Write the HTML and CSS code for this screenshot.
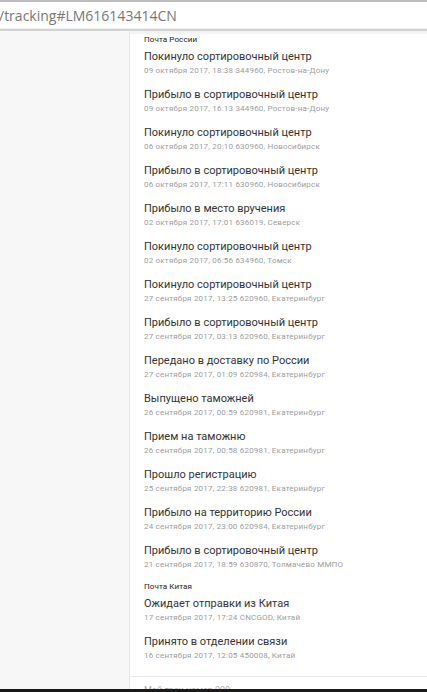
FILE: index.html
```html
<!DOCTYPE html>
<html lang="ru">
<head>
<meta charset="utf-8">
<link rel="stylesheet" href="styles.css">
</head>
<body>
<div class="urlbar"><span class="url">/tracking#LM616143414CN</span></div>
<div class="page">
  <aside class="side"></aside>
  <main class="main">
    <div class="group">
      <div class="op">Почта России</div>
      <div class="item"><div class="t">Покинуло сортировочный центр</div><div class="d">09 октября 2017, 18:38 344960, Ростов-на-Дону</div></div>
      <div class="item"><div class="t">Прибыло в сортировочный центр</div><div class="d">09 октября 2017, 16:13 344960, Ростов-на-Дону</div></div>
      <div class="item"><div class="t">Покинуло сортировочный центр</div><div class="d">06 октября 2017, 20:10 630960, Новосибирск</div></div>
      <div class="item"><div class="t">Прибыло в сортировочный центр</div><div class="d">06 октября 2017, 17:11 630960, Новосибирск</div></div>
      <div class="item"><div class="t">Прибыло в место вручения</div><div class="d">02 октября 2017, 17:01 636019, Северск</div></div>
      <div class="item"><div class="t">Покинуло сортировочный центр</div><div class="d">02 октября 2017, 06:56 634960, Томск</div></div>
      <div class="item"><div class="t">Покинуло сортировочный центр</div><div class="d">27 сентября 2017, 13:25 620960, Екатеринбург</div></div>
      <div class="item"><div class="t">Прибыло в сортировочный центр</div><div class="d">27 сентября 2017, 03:13 620960, Екатеринбург</div></div>
      <div class="item"><div class="t">Передано в доставку по России</div><div class="d">27 сентября 2017, 01:09 620984, Екатеринбург</div></div>
      <div class="item"><div class="t">Выпущено таможней</div><div class="d">26 сентября 2017, 00:59 620981, Екатеринбург</div></div>
      <div class="item"><div class="t">Прием на таможню</div><div class="d">26 сентября 2017, 00:58 620981, Екатеринбург</div></div>
      <div class="item"><div class="t">Прошло регистрацию</div><div class="d">25 сентября 2017, 22:38 620981, Екатеринбург</div></div>
      <div class="item"><div class="t">Прибыло на территорию России</div><div class="d">24 сентября 2017, 23:00 620984, Екатеринбург</div></div>
      <div class="item"><div class="t">Прибыло в сортировочный центр</div><div class="d">21 сентября 2017, 18:59 630870, Толмачево ММПО</div></div>
    </div>
    <div class="group">
      <div class="op">Почта Китая</div>
      <div class="item"><div class="t">Ожидает отправки из Китая</div><div class="d">17 сентября 2017, 17:24 CNCGOD, Китай</div></div>
      <div class="item"><div class="t">Принято в отделении связи</div><div class="d">16 сентября 2017, 12:05 450008, Китай</div></div>
    </div>
    <div class="foot">Мой трек-номер 000</div>
  </main>
</div>
<div class="taskbar"></div>
</body>
</html>
```

FILE: styles.css
```css
html, body {
  margin: 0;
  padding: 0;
  height: 692px;
  overflow: hidden;
  background: #fff;
  font-family: Roboto, "Noto Sans", sans-serif;
}
.urlbar {
  height: 29px;
  border-top: 2px solid #bdbdbd;
  border-bottom: 1px solid #f0f0f0;
  box-sizing: border-box;
  display: flex;
  align-items: center;
  background: #fff;
}
.url {
  font-family: "Open Sans", "Liberation Sans", sans-serif;
  font-size: 14px;
  color: #777;
  margin-left: -1px;
  margin-top: 1px;
}
.page {
  display: flex;
  border-top: 2px solid #d2d2d2;
  height: 661px;
}
.side {
  width: 129px;
  flex: none;
  background: #f7f7f7;
  border-right: 1px solid #e6e6e6;
}
.main {
  flex: 1;
  background: #fff;
  border-top: 3px solid #f4f4f4;
}
.group {
  padding-left: 14px;
}
.op {
  font-size: 8px;
  color: #222;
  height: 12px;
  line-height: 12px;
  letter-spacing: 0.1px;
}
.group + .group .op { padding-top: 5px; }
.item {
  padding-top: 4px;
  height: 36px;
  box-sizing: border-box;
}
.item + .item { height: 38px; padding-top: 6px; }
.t {
  font-size: 11px;
  color: #333;
  line-height: 14px;
}
.d {
  font-size: 8px;
  letter-spacing: 0.2px;
  color: #9d9d9d;
  line-height: 12px;
  margin-top: 1px;
}
.foot {
  margin-top: 9px;
  border-top: 1px solid #e8e8e8;
  padding: 7px 0 0 14px;
  font-size: 9px;
  color: #aaa;
  line-height: 12px;
}
.taskbar {
  position: fixed;
  left: 0; right: 0; bottom: 0;
  height: 3px;
  background: #1a1a1a;
}
```
